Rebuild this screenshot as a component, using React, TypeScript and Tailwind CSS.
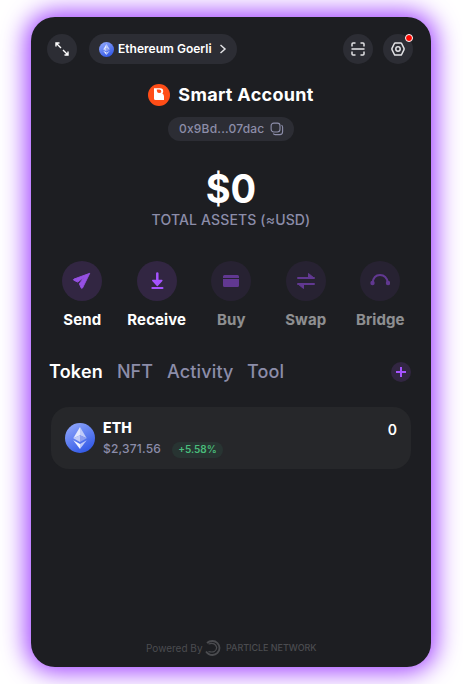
import type { ReactNode } from "react";

function EthLogo({ size, id }: { size: number; id: string }) {
  return (
    <svg width={size} height={size} viewBox="0 0 30 30" className="shrink-0">
      <defs>
        <linearGradient id={id} x1="0.2" y1="0" x2="0.75" y2="1">
          <stop offset="0" stopColor="#8fa6fb" />
          <stop offset="1" stopColor="#2d55e5" />
        </linearGradient>
      </defs>
      <circle cx="15" cy="15" r="15" fill={`url(#${id})`} />
      <path d="M15 4 8.3 15.2 15 12.3Z" fill="#e3e8fd" />
      <path d="M15 4v8.3l6.7 2.9Z" fill="#c0cbf9" />
      <path d="m8.3 15.2 6.7 3.9v-6.8Z" fill="#c0cbf9" />
      <path d="M15 12.3v6.8l6.7-3.9Z" fill="#8c9def" />
      <path d="M8.3 17.3 15 21v5Z" fill="#f2f4ff" />
      <path d="M21.7 17.3 15 21v5Z" fill="#bcc8fa" />
    </svg>
  );
}

function Action({ label, dim, children }: { label: string; dim?: boolean; children: ReactNode }) {
  return (
    <div className={`flex flex-col items-center ${dim ? "opacity-50" : ""}`}>
      <div className="flex size-10 items-center justify-center rounded-full bg-[#322642]">
        <svg width="20" height="20" viewBox="0 0 20 20" fill="none">{children}</svg>
      </div>
      <span className="mt-[9px] text-[15px] leading-5 font-bold tracking-[0.1px] text-white">{label}</span>
    </div>
  );
}

export default function App() {
  return (
    <div className="flex h-[684px] w-[463px] overflow-hidden bg-white pt-[17px] pl-[31px] font-['Inter',sans-serif]">
      <main className="flex h-[650px] w-[400px] shrink-0 flex-col rounded-[24px] bg-[#1d1e22] shadow-[0_0_24px_5px_#a040ff]">
        <header className="mt-[17px] flex h-[30px] items-center px-4 pr-[18px]">
          <button className="flex size-[30px] items-center justify-center rounded-full bg-[#2c2d34]">
            <svg width="14" height="14" viewBox="0 0 14 14" fill="none" stroke="#fff" strokeWidth="1.4">
              <path d="M1 4.500V1h3.500M1 1l5 5M8 8l5 5M13 9.500V13H9.500" />
            </svg>
          </button>
          <button className="ml-3 flex h-[30px] w-[148px] items-center rounded-full bg-[#2c2d34] pl-[10px]">
            <EthLogo size={15} id="networkGradient" />
            <span className="ml-1 text-[12px] font-semibold tracking-[0.02px] whitespace-nowrap text-white">Ethereum Goerli</span>
            <svg className="ml-[7px]" width="8" height="10" viewBox="0 0 8 10" fill="none" stroke="#e2e2e5" strokeWidth="1.5">
              <path d="m1.500 1 4.500 4-4.500 4" />
            </svg>
          </button>
          <button className="ml-auto flex size-[30px] items-center justify-center rounded-full bg-[#2c2d34]">
            <svg width="14" height="14" viewBox="0 0 14 14" fill="none" stroke="#e2e2e5" strokeWidth="1.500">
              <path d="M1 4.500V2q0-1 1-1h2.500M9.500 1H12q1 0 1 1v2.500M1 9.500V12q0 1 1 1h2.500M9.500 13H12q1 0 1-1V9.500" />
              <path d="M.5 7h13" stroke="#b9b9bd" strokeWidth="2" />
            </svg>
          </button>
          <button className="relative ml-[10px] flex size-[30px] items-center justify-center rounded-full bg-[#2c2d34]">
            <svg width="14" height="14" viewBox="0 0 14 14" fill="none" stroke="#e2e2e5" strokeWidth="1.500" strokeLinejoin="round">
              <path d="M4.300 1h5.400q.6 0 .9.500l2.300 4.700q.4.800 0 1.600l-2.300 4.700q-.3.500-.9.500H4.300q-.6 0-.9-.5L1.100 7.800q-.4-.8 0-1.600l2.300-4.700Q3.700 1 4.300 1Z" />
              <circle cx="7" cy="7" r="2.200" />
            </svg>
            <span className="absolute top-0 right-0 size-2 rounded-full border border-white bg-[#ff0800]" />
          </button>
        </header>

        <div className="mt-5 flex h-[22px] items-center justify-center">
          <svg width="22" height="22" viewBox="0 0 22 22">
            <circle cx="11" cy="11" r="11" fill="#ff4d17" />
            <path d="M6 4.300h6.200q3 0 3 2.900 0 1.300-.8 2.300 1.600.8 1.600 3V16H7.500Q6 16 6 14.500Z" fill="#fff" />
            <path d="M8.800 5.600h2.500q2 0 2 1.800 0 1.500-2.100 1.700Q8.800 9.200 8.800 5.600Z" fill="#ff4d17" />
          </svg>
          <h1 className="ml-2 text-[18px] leading-[22px] font-bold tracking-[0.3px] whitespace-nowrap text-white">Smart Account</h1>
        </div>
        <div className="mt-[11px] ml-[137px] flex h-6 w-[126px] items-center rounded-full bg-[#2c2d34] pl-[11px]">
          <span className="text-[12px] font-medium tracking-[0.2px] text-[#8c8da9]">0x9Bd...07dac</span>
          <svg className="ml-[6px]" width="14" height="14" viewBox="0 0 15 15" fill="none" stroke="#8c8da9" strokeWidth="1.2">
            <rect x="1.200" y="1.200" width="9.500" height="9.500" rx="2.800" />
            <path d="M12.300 3.500q1.200.6 1.200 2v5q0 3-3 3h-5q-1.400 0-2-1.200" />
          </svg>
        </div>

        <div className="mt-[24px] h-[48px] scale-x-95 text-center text-[40px] leading-[48px] font-bold text-white">$0</div>
        <div className="mt-[-3px] text-center text-[14px] leading-5 font-medium tracking-[0.15px] text-[#8c8da9]">TOTAL ASSETS (≈USD)</div>

        <section className="mt-[31px] ml-[14px] grid h-[70px] w-[372.500px] grid-cols-5">
          <Action label="Send">
            <path d="M18 2.500 1 8.700q-1 .5-.2 1.200l4.200 2 7-5.200-5.200 7.100 2.100 4.600q.7.900 1.300-.1Z" transform="translate(1 0) scale(.93)" fill="#9650e3" stroke="#9650e3" strokeLinejoin="round" />
          </Action>
          <Action label="Receive">
            <path d="M10.300 2.500v8" stroke="#a553ff" strokeWidth="2.500" strokeLinecap="round" />
            <path d="M5.700 9.500h9.200l-4.600 5Z" fill="#a553ff" stroke="#a553ff" strokeWidth="1.300" strokeLinejoin="round" />
            <path d="M5.400 17h10" stroke="#a553ff" strokeWidth="2.200" strokeLinecap="round" />
          </Action>
          <Action label="Buy" dim>
            <path d="M2 7V5.500Q2 4 3.500 4h13Q18 4 18 5.500V7ZM2 8h16v6.500q0 1.500-1.500 1.500h-13Q2 16 2 14.500Z" fill="#a553ff" />
          </Action>
          <Action label="Swap" dim>
            <path d="M2 7h16M2 13h16" stroke="#a553ff" strokeWidth="2" strokeLinecap="round" />
            <path d="M12.500 2.500 18 7h-5.500ZM7.500 17.500 2 13h5.500Z" fill="#a553ff" stroke="#a553ff" strokeLinejoin="round" />
          </Action>
          <Action label="Bridge" dim>
            <path d="M2.500 12q1-8 7.500-8t8 8" stroke="#a553ff" strokeWidth="2" />
            <circle cx="2.500" cy="12" r="2.200" fill="#a553ff" />
            <circle cx="18" cy="12" r="2.200" fill="#a553ff" />
          </Action>
        </section>

        <nav className="mt-[29px] flex h-6 items-center pr-5 pl-[18px] text-[18px] font-medium text-[#8c8da9]">
          <span className="mb-px w-[68px] font-semibold tracking-[0.2px] text-white">Token</span>
          <span className="mb-px w-[50px]">NFT</span>
          <span className="mb-px w-[80px] tracking-[0.15px]">Activity</span>
          <span className="mb-px tracking-[0.15px]">Tool</span>
          <button className="ml-auto flex size-5 items-center justify-center rounded-full bg-[#322642]">
            <svg width="10" height="10" viewBox="0 0 10 10" stroke="#a553ff" strokeWidth="2"><path d="M5 0v10M0 5h10" /></svg>
          </button>
        </nav>

        <section className="mx-5 mt-[23px] flex h-[62px] items-center rounded-[18px] bg-[#26272a] pr-[14px] pl-[14px]">
          <EthLogo size={30} id="tokenGradient" />
          <div className="ml-2 flex h-[42px] flex-col">
            <span className="h-5 text-[14px] leading-[22px] font-extrabold tracking-[0.1px] text-white">ETH</span>
            <div className="mt-[2px] flex h-5 items-center">
              <span className="w-[69px] text-[12px] font-medium tracking-[0.2px] text-[#8c8da9]">$2,371.56</span>
              <span className="mt-px flex h-4 w-[51px] items-center justify-center rounded-full bg-[#283432] text-[10px] font-semibold text-[#49bd7b]">+5.58%</span>
            </div>
          </div>
          <span className="mb-4 ml-auto text-[14px] leading-5 font-semibold text-white">0</span>
        </section>

        <footer className="mt-auto mb-[10px] flex h-[18px] items-center pl-[115px] text-[#4b4c50]">
          <span className="w-[56px] text-[10px] whitespace-nowrap">Powered By</span>
          <svg className="ml-[3px]" width="16" height="16" viewBox="0 0 16 16" fill="none" stroke="currentColor">
            <path d="M2 3Q4 1 7.500 1a7 7 0 0 1 0 14Q3.500 15 1 11.500" strokeWidth="1.800" />
            <path d="M3.500 4Q10.500 2 11.700 7.500 11 13.500 3.500 11.500" strokeWidth="1.200" />
          </svg>
          <span className="ml-[5px] text-[9px] font-medium tracking-[-0.04px] whitespace-nowrap">PARTICLE NETWORK</span>
        </footer>
      </main>
    </div>
  );
}
